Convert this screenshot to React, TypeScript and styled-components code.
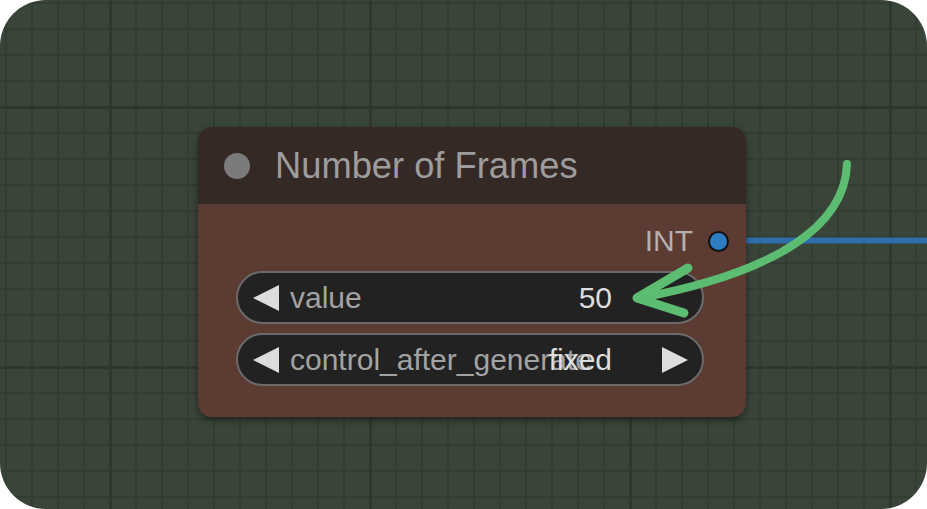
import React from "react";
import styled, { createGlobalStyle } from "styled-components";

const Global = createGlobalStyle`
  html, body { margin: 0; padding: 0; background: #ffffff; }
  body { font-family: "Liberation Sans", Arial, sans-serif; }
`;

const Canvas = styled.div`
  position: relative;
  width: 927px;
  height: 509px;
  border-radius: 46px;
  overflow: hidden;
  background-color: #3a4539;
  background-image:
    linear-gradient(to right, #2f382f 3px, transparent 3px),
    linear-gradient(to bottom, #2f382f 3px, transparent 3px),
    linear-gradient(to right, #333d33 2px, transparent 2px),
    linear-gradient(to bottom, #333d33 2px, transparent 2px);
  background-size: 260px 260px, 260px 260px, 26px 26px, 26px 26px;
  background-position: 109px 0, 0 106px, 5px 0, 0 2px;
`;

const Layer = styled.svg<{ $z: number }>`
  position: absolute;
  left: 0;
  top: 0;
  width: 927px;
  height: 509px;
  z-index: ${(p) => p.$z};
  pointer-events: none;
`;

const Node = styled.div<{ $x: number; $y: number; $w: number }>`
  position: absolute;
  left: ${(p) => p.$x}px;
  top: ${(p) => p.$y}px;
  width: ${(p) => p.$w}px;
  z-index: 2;
  display: flex;
  flex-direction: column;
  border-radius: 14px;
  overflow: hidden;
  background: #5c3b33;
  box-shadow: 0 3px 7px rgba(0, 0, 0, 0.45);
`;

const TitleBar = styled.div`
  height: 77px;
  display: flex;
  align-items: center;
  gap: 25px;
  padding-left: 26px;
  background: #352925;
`;

const TitleDot = styled.div`
  width: 26px;
  height: 26px;
  border-radius: 50%;
  background: #7b7b7b;
`;

const TitleText = styled.div`
  font-size: 36.3px;
  color: #9d9d9d;
  white-space: nowrap;
`;

const Body = styled.div`
  display: flex;
  flex-direction: column;
  padding: 20px 42px 31px 38px;
`;

const OutputRow = styled.div`
  height: 34px;
  display: flex;
  justify-content: flex-end;
  align-items: center;
  gap: 15px;
  margin-right: -25px;
`;

const OutputLabel = styled.div`
  font-size: 30px;
  color: #b5b0b0;
`;

const OutputDot = styled.div`
  width: 17px;
  height: 17px;
  border-radius: 50%;
  border: 2px solid #111111;
  background: #2f7dc0;
`;

const WidgetList = styled.div`
  margin-top: 13px;
  display: flex;
  flex-direction: column;
  gap: 9px;
`;

const Widget = styled.div`
  box-sizing: border-box;
  height: 53px;
  display: flex;
  align-items: center;
  padding: 0 14px 0 15px;
  border: 2px solid #6a6a6a;
  border-radius: 27px;
  background: #222222;
`;

const Arrow = styled.div<{ $dir: "left" | "right"; $hidden?: boolean }>`
  width: 0;
  height: 0;
  flex: none;
  border-top: 13px solid transparent;
  border-bottom: 13px solid transparent;
  ${(p) =>
    p.$dir === "left"
      ? "border-right: 26px solid #dddddd;"
      : "border-left: 26px solid #dddddd;"}
  visibility: ${(p) => (p.$hidden ? "hidden" : "visible")};
`;

const WidgetContent = styled.div`
  flex: 1;
  display: grid;
  align-items: center;
  margin: 0 50px 0 11px;
  font-size: 30px;
  white-space: nowrap;
`;

const WidgetLabel = styled.span`
  grid-area: 1 / 1;
  justify-self: start;
  color: #a3a3a3;
`;

const WidgetValue = styled.span`
  grid-area: 1 / 1;
  justify-self: end;
  color: #dddddd;
`;

type WidgetData = { label: string; value: string; rightArrow: boolean };

const widgets: WidgetData[] = [
  { label: "value", value: "50", rightArrow: false },
  { label: "control_after_generate", value: "fixed", rightArrow: true },
];

export default function App() {
  return (
    <>
      <Global />
      <Canvas>
        <Layer $z={1} viewBox="0 0 927 509">
          <line x1="700" y1="240.5" x2="935" y2="240.5" stroke="#2f6eab" strokeWidth="6" />
        </Layer>
        <Node $x={198} $y={127} $w={548}>
          <TitleBar>
            <TitleDot />
            <TitleText>Number of Frames</TitleText>
          </TitleBar>
          <Body>
            <OutputRow>
              <OutputLabel>INT</OutputLabel>
              <OutputDot />
            </OutputRow>
            <WidgetList>
              {widgets.map((w) => (
                <Widget key={w.label}>
                  <Arrow $dir="left" />
                  <WidgetContent>
                    <WidgetLabel>{w.label}</WidgetLabel>
                    <WidgetValue>{w.value}</WidgetValue>
                  </WidgetContent>
                  <Arrow $dir="right" $hidden={!w.rightArrow} />
                </Widget>
              ))}
            </WidgetList>
          </Body>
        </Node>
        <Layer $z={3} viewBox="0 0 927 509">
          <path
            d="M 847 164 C 845 225, 778 272, 640 298"
            fill="none"
            stroke="#5cbd72"
            strokeWidth="8"
            strokeLinecap="round"
          />
          <path
            d="M 688 268 L 637 298 L 684 313"
            fill="none"
            stroke="#5cbd72"
            strokeWidth="9"
            strokeLinecap="round"
            strokeLinejoin="round"
          />
        </Layer>
      </Canvas>
    </>
  );
}
